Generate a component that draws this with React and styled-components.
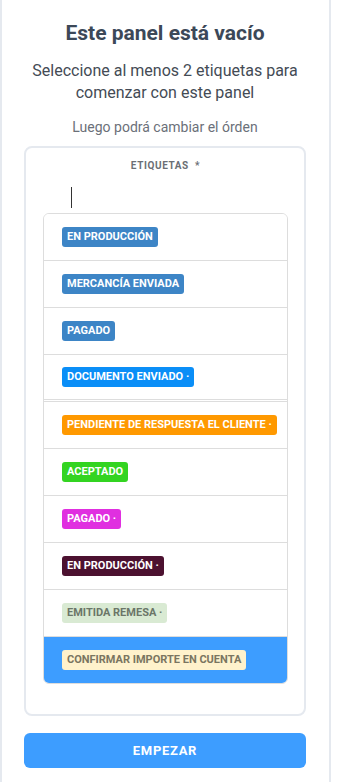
import React from 'react';
import styled, { createGlobalStyle } from 'styled-components';

const GlobalStyle = createGlobalStyle`
  html, body {
    margin: 0;
    padding: 0;
    background: #ffffff;
  }
  body {
    font-family: Roboto, "Noto Sans", sans-serif;
  }
  * {
    box-sizing: border-box;
  }
`;

const tags = [
  { label: 'EN PRODUCCIÓN', bg: '#3d85c6', color: '#ffffff' },
  { label: 'MERCANCÍA ENVIADA', bg: '#3d85c6', color: '#ffffff' },
  { label: 'PAGADO', bg: '#3d85c6', color: '#ffffff' },
  { label: 'DOCUMENTO ENVIADO ·', bg: '#0a8ef7', color: '#ffffff', split: true },
  { label: 'PENDIENTE DE RESPUESTA EL CLIENTE ·', bg: '#ff9900', color: '#ffffff' },
  { label: 'ACEPTADO', bg: '#33d421', color: '#ffffff' },
  { label: 'PAGADO ·', bg: '#e02fe0', color: '#ffffff' },
  { label: 'EN PRODUCCIÓN ·', bg: '#4c1130', color: '#ffffff' },
  { label: 'EMITIDA REMESA ·', bg: '#d9ead3', color: '#6b7668' },
  { label: 'CONFIRMAR IMPORTE EN CUENTA', bg: '#fff2cc', color: '#7a7560', active: true },
];

function App() {
  return (
    <>
      <GlobalStyle />
      <Page>
        <Title>Este panel está vacío</Title>
        <Subtitle>Seleccione al menos 2 etiquetas para comenzar con este panel</Subtitle>
        <Hint>Luego podrá cambiar el órden</Hint>
        <Card>
          <FieldLabel>ETIQUETAS&nbsp; *</FieldLabel>
          <InputArea>
            <Caret />
          </InputArea>
          <TagList>
            {tags.map((t) => (
              <TagRow key={t.label} $active={t.active} $split={t.split}>
                <Badge $bg={t.bg} $color={t.color}>{t.label}</Badge>
              </TagRow>
            ))}
          </TagList>
        </Card>
        <StartButton>EMPEZAR</StartButton>
      </Page>
    </>
  );
}

const Page = styled.div`
  width: 331px;
  min-height: 782px;
  border-left: 2px solid #e5e9ef;
  border-right: 2px solid #e5e9ef;
  padding: 20px 23px 0 22px;
  display: flex;
  flex-direction: column;
  align-items: stretch;
  text-align: center;
`;

const Title = styled.h1`
  margin: 0;
  font-size: 21px;
  line-height: 26px;
  font-weight: 700;
  color: #3c4858;
`;

const Subtitle = styled.p`
  margin: 14px 4px 0;
  font-size: 16px;
  line-height: 22px;
  font-weight: 400;
  color: #444b55;
`;

const Hint = styled.p`
  margin: 14px 0 0;
  font-size: 14px;
  line-height: 18px;
  color: #6b7079;
`;

const Card = styled.div`
  margin-top: 10px;
  border: 2px solid #e5e9ef;
  border-radius: 8px;
  padding: 11px 16px 30px 17px;
  display: flex;
  flex-direction: column;
`;

const FieldLabel = styled.div`
  font-size: 10px;
  line-height: 14px;
  font-weight: 700;
  color: #6b6f75;
  letter-spacing: 0.6px;
`;

const InputArea = styled.div`
  height: 40px;
  display: flex;
  align-items: center;
  padding-left: 28px;
  padding-top: 8px;
`;

const Caret = styled.span`
  display: block;
  width: 1px;
  height: 21px;
  background: #333333;
`;

const TagList = styled.div`
  border: 1px solid #dddddd;
  border-radius: 6px;
  overflow: hidden;
  text-align: left;
`;

const TagRow = styled.div`
  height: ${(p) => (p.$active ? '46px' : '47px')};
  padding: 0 18px;
  display: flex;
  align-items: center;
  border-bottom: ${(p) => (p.$active ? 'none' : p.$split ? '3px double #dddddd' : '1px solid #dddddd')};
  background: ${(p) => (p.$active ? '#3d9dff' : '#ffffff')};
`;

const Badge = styled.span`
  display: inline-block;
  height: 20px;
  line-height: 20px;
  padding: 0 5px;
  border-radius: 3px;
  font-size: 11px;
  font-weight: 700;
  white-space: nowrap;
  background: ${(p) => p.$bg};
  color: ${(p) => p.$color};
`;

const StartButton = styled.button`
  margin-top: 17px;
  height: 35px;
  border: none;
  border-radius: 6px;
  background: #3d9dff;
  color: #ffffff;
  font-family: Roboto, "Noto Sans", sans-serif;
  font-size: 13px;
  font-weight: 700;
  letter-spacing: 0.7px;
`;

export default App;
